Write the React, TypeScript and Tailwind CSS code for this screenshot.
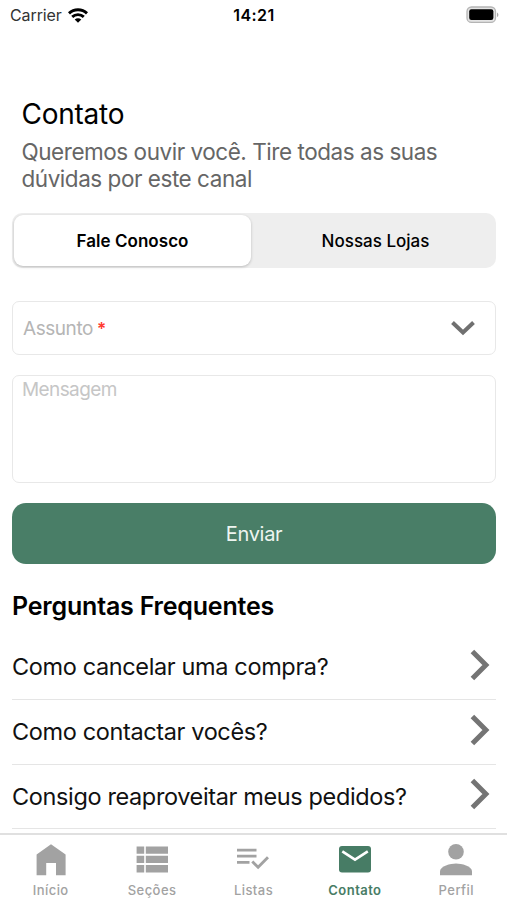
import { useState } from 'react'
import type { ReactNode } from 'react'
import clsx from 'clsx'

const QUESTIONS = ['Como cancelar uma compra?', 'Como contactar vocês?', 'Consigo reaproveitar meus pedidos?']

/* ── Icons ─── */
function WifiIcon() {
  return (
    <svg width="20" height="15" viewBox="0 0 20 15" fill="none" stroke="#000" strokeWidth="2.9">
      <path d="M1 5.4C6 .6 14 .6 19 5.4" />
      <path d="M4.2 8.9c3.3-3.1 8.3-3.1 11.6 0" />
      <path d="M10 14.8 6.7 11.6c1.9-1.7 4.7-1.7 6.6 0Z" fill="#000" stroke="none" />
    </svg>
  )
}

function BatteryIcon() {
  return (
    <svg width="34" height="18" viewBox="0 0 34 18">
      <rect x="1" y="1" width="28.5" height="15.4" rx="4.5" fill="#e4e4e4" stroke="#b4b4b4" strokeWidth="1.3" />
      <rect x="3.2" y="3.3" width="24.2" height="10.6" rx="2.2" fill="#000" />
      <path d="M31 6.4c1.9.8 1.9 3.8 0 4.6Z" fill="#a9a9a9" />
    </svg>
  )
}

function HomeIcon() {
  return (
    <svg width="32" height="32" viewBox="0 0 32 32" fill="currentColor">
      <path d="M16 .2 30.6 10.6v20.6H21V19H11.2v12.2H1.6V10.6Z" />
    </svg>
  )
}

function SectionsIcon() {
  return (
    <svg width="32" height="32" viewBox="0 0 32 32" fill="currentColor">
      <path d="M.6 2.4h7.6v7.4H.6ZM9.8 2.4H32v7.4H9.8ZM.6 11.7h7.6v7.4H.6ZM9.8 11.7H32v7.4H9.8ZM.6 21h7.6v7.4H.6ZM9.8 21H32v7.4H9.8Z" />
    </svg>
  )
}

function ListsIcon() {
  return (
    <svg width="32" height="32" viewBox="0 0 32 32" fill="none" stroke="currentColor" strokeWidth="2.7">
      <path d="M0 6.1h19.5M0 12.2h19.5M0 18.4h12.5" />
      <path d="m15.3 17.5 5.8 5.8L31 13.2" strokeWidth="2.9" />
    </svg>
  )
}

function MailIcon() {
  return (
    <svg width="32" height="32" viewBox="0 0 32 32">
      <rect x="0" y="2" width="32" height="26.6" rx="3" fill="currentColor" />
      <path d="M3.3 7.4 16 15.7l12.8-8.3" fill="none" stroke="#fff" strokeWidth="2.6" />
    </svg>
  )
}

function PersonIcon() {
  return (
    <svg width="32" height="32" viewBox="0 0 32 32" fill="currentColor">
      <circle cx="16" cy="7.8" r="7.8" />
      <path d="M0 31.2v-4c0-5.1 10.6-7.8 16-7.8s16 2.7 16 7.8v4Z" />
    </svg>
  )
}

/* ── Tab bar ─── */
const TABS: { label: string; icon: ReactNode }[] = [
  { label: 'Início', icon: <HomeIcon /> },
  { label: 'Seções', icon: <SectionsIcon /> },
  { label: 'Listas', icon: <ListsIcon /> },
  { label: 'Contato', icon: <MailIcon /> },
  { label: 'Perfil', icon: <PersonIcon /> },
]

function TabBar({ active }: { active: string }) {
  return (
    <nav className="grid h-[67px] shrink-0 grid-cols-5 border-t-2 border-[#e0e0e0] bg-white">
      {TABS.map(({ label, icon }) => (
        <button
          key={label}
          className={clsx(
            'flex flex-col items-center pt-[9px] text-[13px] leading-4 tracking-[0.45px]',
            active === label ? 'font-semibold text-[#477c65]' : 'font-medium text-[#a2a2a2]',
          )}
        >
          {icon}
          <span className="mt-1.5">{label}</span>
        </button>
      ))}
    </nav>
  )
}

/* ── Contact page ─── */
export default function App() {
  const [segment, setSegment] = useState('Fale Conosco')

  return (
    <div className="flex h-[900px] w-[507px] flex-col overflow-hidden bg-white font-['Inter',sans-serif] text-black">
      {/* Status bar */}
      <header className="grid h-[30px] shrink-0 grid-cols-3 items-center pl-2.5 pr-[7px]">
        <div className="flex items-center gap-1.5 text-[16px] tracking-[-0.1px] text-[#333]">
          Carrier
          <WifiIcon />
        </div>
        <span className="pr-0.5 text-center text-[16px] font-semibold tracking-[0.45px]">14:21</span>
        <div className="flex justify-end">
          <BatteryIcon />
        </div>
      </header>

      <main className="flex min-h-0 flex-1 flex-col overflow-hidden pl-3 pr-[11px] pt-[66px]">
        <div className="h-[117px] shrink-0 pl-[9.5px]">
          <h1 className="text-[28px] leading-9 tracking-[-0.25px]">Contato</h1>
          <p className="mt-1.5 text-[22.5px] leading-[27px] tracking-[-0.46px] text-[#666]">
            Queremos ouvir você. Tire todas as suas
            <br />
            dúvidas por este canal
          </p>
        </div>

        <div className="grid h-[55px] shrink-0 grid-cols-[237px_1fr] gap-1 rounded-[10px] bg-[#eee] p-0.5">
          {['Fale Conosco', 'Nossas Lojas'].map((name) => (
            <button
              key={name}
              onClick={() => setSegment(name)}
              className={clsx(
                'rounded-[9px] pt-0.5 text-[17px]',
                segment === name
                  ? 'bg-white font-semibold tracking-[0.05px] shadow-[0_1px_3px_rgba(0,0,0,0.22)]'
                  : 'pl-0.5 font-medium',
              )}
            >
              {name}
            </button>
          ))}
        </div>

        {/* Form */}
        <div className="mt-[33px] flex h-[54px] shrink-0 items-center justify-between rounded-[7px] border-[1.5px] border-[#e8e8e8] pl-2.5 pr-5 text-[19px] text-[#b5b5b5]">
          <span className="flex gap-1 pt-0.5 tracking-[-0.45px]">
            Assunto
            <span className="pt-0.5 text-[17px] font-semibold text-[#ff3b30]">*</span>
          </span>
          <svg width="24" height="16" viewBox="0 0 24 16" fill="none" stroke="#707070" strokeWidth="4">
            <path d="m1.5 2.5 10.5 10 10.5-10" />
          </svg>
        </div>
        <textarea
          placeholder="Mensagem"
          className="mt-5 h-[108px] shrink-0 resize-none rounded-[7px] border-[1.5px] border-[#e8e8e8] px-[9px] py-0.5 text-[19px] leading-6 tracking-[-0.6px] placeholder:text-[#c6c6c6]"
        />
        <button className="mt-5 h-[61px] shrink-0 rounded-[14px] bg-[#497e67] text-[20px] tracking-[-0.3px] text-[#edf5f0]">
          Enviar
        </button>

        {/* FAQ */}
        <h2 className="mt-[26px] text-[25px] font-semibold leading-8 tracking-[-0.2px]">Perguntas Frequentes</h2>
        <ul className="mt-[13px]">
          {QUESTIONS.map((text) => (
            <li
              key={text}
              className="flex h-[64.8px] items-center justify-between border-b-[1.5px] border-[#e5e5e5] pr-1.5"
            >
              <span className="text-[23.5px] tracking-[-0.37px] text-[#111]">{text}</span>
              <svg className="mb-1" width="20" height="32" viewBox="0 0 20 32" fill="none" stroke="#747474" strokeWidth="5">
                <path d="m2.4 2.5 13.5 13.5L2.4 29.5" />
              </svg>
            </li>
          ))}
        </ul>
      </main>

      <TabBar active="Contato" />
    </div>
  )
}
